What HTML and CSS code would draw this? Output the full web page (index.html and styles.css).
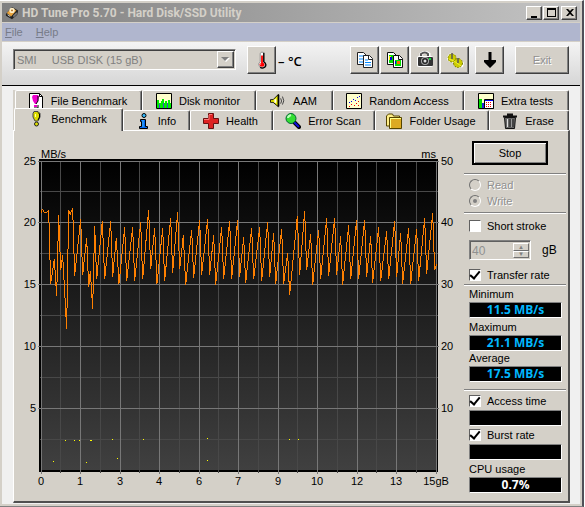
FILE: index.html
```html
<!DOCTYPE html>
<html lang="en">
<head>
<meta charset="utf-8">
<title>HD Tune Pro 5.70 - Hard Disk/SSD Utility</title>
<link rel="stylesheet" href="styles.css">
</head>
<body>
<div class="window">
  <header class="titlebar">
    <svg class="app-icon" viewBox="0 0 16 16"><path d="M1 9 8 1l7 4-1 5-6 5-7-4z" fill="#222"/><path d="M2 8 8 2l5 3-6 7z" fill="#e8a33c"/><circle cx="8" cy="5" r="3" fill="#fff0c8"/><circle cx="8" cy="5" r="1" fill="#a66018"/><path d="m9 11 4-4 1 2-4 4z" fill="#777"/><path d="m3 10 3 2" stroke="#eee"/></svg>
    <h1>HD Tune Pro 5.70 - Hard Disk/SSD Utility</h1>
    <div class="caption-buttons">
      <button aria-label="Minimize"><svg viewBox="0 0 11 10"><path d="M2 8h6v2H2z"/></svg></button>
      <button aria-label="Maximize"><svg viewBox="0 0 11 10"><path fill-rule="evenodd" d="M1 0h9v9H1zM2 2v6h7V2z"/></svg></button>
      <button aria-label="Close" class="close"><svg viewBox="0 0 11 10"><path d="M2 1h2l2 2 2-2h2L7 4.500 10 8H8L6 6 4 8H2l3-3.500z"/></svg></button>
    </div>
  </header>
  <nav class="menubar"><a href="#file"><u>F</u>ile</a><a href="#help"><u>H</u>elp</a></nav>
  <div class="toolbar">
    <div class="drive">
      <select disabled aria-label="Drive"><option>SMI &nbsp; &nbsp; USB DISK (15 gB)</option></select>
      <span class="drop"><svg viewBox="0 0 9 5"><path d="M1 1h8L5 5z" fill="#fff"/><path d="M0 0h8L4 4z" fill="#808080"/></svg></span>
    </div>
    <button class="tool temp" aria-label="Temperature"><svg viewBox="0 0 16 20"><path d="M6 2.500q2-3 4 0V12q3 2 1 5-3 3-6 0-2-3 1-5z" fill="#fff" stroke="#888"/><path d="M10 2v10q4 3 1 6-3 2-5 0" fill="none" stroke="#000" stroke-width="1.500"/><path d="M7 5h2v8q3 1 1 4-2 1-4 0-2-3 1-4z" fill="#f00"/><path d="M6 14h1v1H6z" fill="#fff"/></svg></button>
    <span class="degrees">– °C</span>
    <div class="tools">
      <button class="tool" aria-label="Copy text"><svg viewBox="0 0 18 18"><path d="M1.500 1.500h6l3 3v9h-9z" fill="#fff" stroke="#222"/><path d="M3 5h5M3 8h5M3 11h5" stroke="#08f"/><path d="M7.500 4.500h6l3 3v9h-9z" fill="#fff" stroke="#222"/><path d="M12.500 4.500v4h4" fill="none" stroke="#222"/><path d="M9 9h3M9 11.500h6M9 14h6" stroke="#08f"/></svg></button>
      <button class="tool" aria-label="Copy image"><svg viewBox="0 0 18 18"><path d="M1.500 1.500h6l3 3v9h-9z" fill="#fff" stroke="#111"/><path d="M3 4h4v8H3z" fill="#0d0"/><path d="M3 5h2v4H3z" fill="#fe0"/><path d="M4 6h2v3H4z" fill="#00d"/><path d="M7.500 4.500h6l3 3v9h-9z" fill="#fff" stroke="#111"/><path d="M12.500 4.500v4h4" fill="none" stroke="#111"/><path d="M9 9h6v6H9z" fill="#0d0"/><path d="M11 10h3v3h-3z" fill="#f60"/><path d="M9 10h1v3H9z" fill="#00d"/></svg></button>
      <button class="tool" aria-label="Save screenshot"><svg viewBox="0 0 18 18"><path d="M5 5V3q4-3 8 0v2" fill="none" stroke="#fff" stroke-width="3"/><path d="M5 6V3q4-3 7 0v3" fill="none" stroke="#555" stroke-width="2"/><rect x="1" y="5" width="16" height="11" rx="2" fill="#fff"/><rect x="2" y="6" width="15" height="9" rx="1" fill="#333"/><circle cx="9" cy="10" r="4" fill="#aaa"/><circle cx="9" cy="10" r="3" fill="#222"/><circle cx="9" cy="10" r="1.500" fill="#ddd"/><path d="M13 7h2v2h-2z" fill="#0d3"/></svg></button>
      <button class="tool" aria-label="Options"><svg viewBox="0 0 18 18"><path d="M1 6 3 3l2-1 3 1 2 4 5 1 3 4-1 4-4 1-4-1-1-4-4-1-3-2z" fill="#fff"/><circle cx="6" cy="7" r="4" fill="#cc0" stroke="#880" stroke-dasharray="2 1"/><circle cx="12" cy="12" r="4.500" fill="#cc0" stroke="#770" stroke-dasharray="2 1"/><path d="m8 10 7 5M3 8l5 2" stroke="#ee3"/><path d="M6 2v6M12 7v5" stroke="#555" stroke-width="1.500"/></svg></button>
      <button class="tool down" aria-label="Save results"><svg viewBox="0 0 18 18"><path d="M7.500 1h3v8H15v2l-6 6-6-6V9h4.500z" fill="#000"/></svg></button>
      <button class="tool exit" disabled>Exit</button>
    </div>
  </div>

  <main class="client">
    <div class="tabs back" role="tablist" aria-label="Tests">
      <button role="tab"><svg viewBox="0 0 16 16"><path d="M1.500.5h10l3 3v12h-13z" fill="#fff" stroke="#000"/><path d="M11.500.5v3h3" fill="none" stroke="#000"/><path d="M5 2h5l1 2-1 4-2 3H7L5 8 4 4z" fill="#e0c"/><path d="M10 3v5l-2 3M6 15h4v-3" fill="none" stroke="#000"/><path d="M6 12h3v2H6z" fill="#e0c"/></svg>File Benchmark</button>
      <button role="tab"><svg viewBox="0 0 16 16"><path d="M.5.5h15v15H.5z" fill="#ffc" stroke="#000"/><path d="M1 7h2v3h2V8h1V6h2v4h1V8h2v2h1V7h2v3h1v5H1z" fill="#0e0"/><path d="M3 11h1v4H3zM7 10h1v5H7zM11 10h1v5h-1z" fill="#44c"/></svg>Disk monitor</button>
      <button role="tab"><svg viewBox="0 0 18 16"><path d="M.5 6.500h3l6-6v14l-6-5h-3z" fill="#ee0" stroke="#000"/><path d="M5 6h2v4H5z" fill="#fff"/><path d="M9.500 1v13" stroke="#000" stroke-width="2"/><path d="M12 5q2 3 0 6M14 3q3 5 0 9" fill="none" stroke="#333"/></svg>AAM</button>
      <button role="tab"><svg viewBox="0 0 16 16"><path d="M.5.5h15v15H.5z" fill="#ffc" stroke="#000"/><path d="M3 9h1v1H3zM5 8h1v1H5zM7 6h1v1H7zM9 7h1v1H9zM11 4h1v1h-1zM13 3h1v1h-1z" fill="#00e"/><path d="M3 13h1v1H3zM5 11h1v1H5zM8 12h1v1H8zM10 10h1v1h-1zM12 12h1v1h-1zM12 8h1v1h-1z" fill="#e00"/></svg>Random Access</button>
      <button role="tab"><svg viewBox="0 0 16 16"><path d="M.5.5h15v15H.5z" fill="#ffc" stroke="#000"/><path d="M1 6h3v9H1z" fill="#0d0"/><path d="M4 10h2v5H4z" fill="#22d"/><path d="M6.500 6.500h9v9h-9z" fill="#fff" stroke="#000"/><path d="M7 7h8v1H7z" fill="#00e"/><path d="M8 9.500h6M8 11.500h6M8 13.500h6" stroke="#e00" stroke-dasharray="1 1"/></svg>Extra tests</button>
    </div>
    <div class="tabs front" role="tablist" aria-label="Tools">
      <button role="tab" aria-selected="true"><svg viewBox="0 0 16 16"><path d="M6 .5h4l2 2V6l-2 4H7L5 6V2.500z" fill="#dd0" stroke="#444"/><path d="M10 1.500 11.500 3v3L10 9" fill="none" stroke="#000"/><path d="M7 3h1v3H7z" fill="#ffa"/><circle cx="8.500" cy="13" r="2" fill="#dd0" stroke="#222"/></svg>Benchmark</button>
      <button role="tab"><svg viewBox="0 0 16 16"><circle cx="9" cy="2.500" r="2" fill="#3bf" stroke="#000"/><path d="M5.500 6.500h5v7h2v2h-8v-2h2v-5h-1z" fill="#06e" stroke="#000"/><path d="M8 7v7" stroke="#4bf"/></svg>Info</button>
      <button role="tab"><svg viewBox="0 0 16 16"><path d="M5.500.5h5v5h5v5h-5v5h-5v-5h-5v-5h5z" fill="#d22" stroke="#611"/><path d="M6 1.500h3M1 6.500h5V2" fill="none" stroke="#f77"/></svg>Health</button>
      <button role="tab"><svg viewBox="0 0 16 16"><path d="m9 9 5 5" stroke="#000" stroke-width="4" stroke-linecap="round"/><path d="m9 9 5 5" stroke="#11d" stroke-width="2"/><circle cx="6" cy="5.500" r="5" fill="#3d3" stroke="#063"/><path d="M3 5q0-2 3-3" fill="none" stroke="#bfb" stroke-width="2"/></svg>Error Scan</button>
      <button role="tab"><svg viewBox="0 0 16 16"><path d="M.5 13V3l2-2h4l1 2h6v10z" fill="#fe8" stroke="#540"/><path d="M3.500 15.500v-11h12v11z" fill="#da2" stroke="#540"/><path d="M4 5.500h11M4.500 5v10" stroke="#ff8"/></svg>Folder Usage</button>
      <button role="tab"><svg viewBox="0 0 16 16"><path d="M1 3.500h14M6 3V1.500h4V3" fill="none" stroke="#111" stroke-width="2"/><path d="M2.500 4.500h11l-1 11h-9z" fill="#666" stroke="#111"/><path d="M5.500 6v8" stroke="#ddd"/><path d="M8 6v8M11 6v8" stroke="#222"/><path d="M9.500 6v8" stroke="#999"/></svg>Erase</button>
    </div>

    <section class="panel">
      <svg class="chart" viewBox="14 144 448 345" role="img" aria-label="Transfer rate and access time">
        <defs><linearGradient id="plot" x1="0" y1="0" x2="0" y2="1"><stop offset="0"/><stop offset="1" stop-color="#404040"/></linearGradient></defs>
        <g shape-rendering="crispEdges">
          <path d="M39 159h399v313H39z"/>
          <path d="M41 161h396v309H41z" fill="url(#plot)"/>
          <path d="M40 191.500h398M40 253.500h398M40 315.500h398M40 377.500h398M40 439.500h398M60.500 161v312M100.500 161v312M139.500 161v312M179.500 161v312M218.500 161v312M258.500 161v312M297.500 161v312M337.500 161v312M376.500 161v312M416.500 161v312" stroke="#484848"/>
          <path d="M38 161.500h401M38 222.500h401M38 284.500h401M38 346.500h401M38 408.500h401M41.500 161v313M80.500 161v313M120.500 161v313M159.500 161v313M199.500 161v313M238.500 161v313M278.500 161v313M317.500 161v313M357.500 161v313M396.500 161v313M436.500 161v313" stroke="#777"/>
          <path d="M53 461h1v1h-1zM65 440h1v1h-1zM74 440h1v1h-1zM79 440h1v1h-1zM90 440h2v1h-2zM86 462h1v1h-1zM112 439h1v1h-1zM117 458h1v1h-1zM143 439h1v1h-1zM207 438h1v1h-1zM207 460h1v1h-1zM289 439h1v1h-1zM298 439h1v1h-1z" fill="#ff0"/>
          <svg x="0" y="140" width="480" height="200" viewBox="0 0 1440 600"><polyline fill="none" stroke="#ff8000" stroke-width="3" points="124,218 127,208 133,217 140,217 146,211 152,431 163,358 170,467 176,226 182,391 188,346 200,566 206,213 211,222 218,205 224,407 242,238 248,404 260,294 266,440 271,394 278,506 284,258 290,418 307,243 314,418 332,244 338,410 349,294 357,431 374,262 380,422 398,262 404,422 422,247 428,418 446,210 452,388 464,265 471,431 488,265 494,422 512,234 518,398 533,216 539,388 550,286 557,434 575,270 581,413 599,240 605,404 623,237 629,404 641,286 647,434 665,262 671,416 689,244 695,416 713,240 719,410 731,292 737,428 755,265 761,418 779,262 785,422 803,247 809,410 821,280 827,431 845,268 851,431 863,340 869,465 892,228 899,404 914,213 920,391 932,282 938,434 956,270 962,416 980,234 986,407 1004,234 1010,404 1022,289 1028,434 1046,256 1052,418 1070,240 1076,416 1094,240 1100,410 1112,289 1118,428 1136,262 1142,422 1160,274 1166,418 1184,243 1190,410 1202,280 1208,431 1226,265 1232,431 1250,268 1256,422 1274,234 1280,401 1298,219 1304,391 1310,372"/></svg>
        </g>
        <text x="41" y="158">MB/s</text><text x="436" y="158" text-anchor="end">ms</text>
        <g text-anchor="end"><text x="36" y="165">25</text><text x="36" y="226">20</text><text x="36" y="288">15</text><text x="36" y="350">10</text><text x="36" y="412">5</text></g>
        <g><text x="441" y="165">50</text><text x="441" y="226">40</text><text x="441" y="288">30</text><text x="441" y="350">20</text><text x="441" y="412">10</text></g>
        <g text-anchor="middle"><text x="41" y="485">0</text><text x="80" y="485">1</text><text x="120" y="485">3</text><text x="159" y="485">4</text><text x="199" y="485">6</text><text x="238" y="485">7</text><text x="278" y="485">9</text><text x="317" y="485">10</text><text x="357" y="485">12</text><text x="396" y="485">13</text><text x="436" y="485">15gB</text></g>
      </svg>
      <form class="side">
        <button type="button" class="stop">Stop</button>
        <hr class="after-stop">
        <label class="row off"><input type="radio" name="mode" disabled>Read</label>
        <label class="row off"><input type="radio" name="mode" checked disabled>Write</label>
        <hr class="after-mode">
        <label class="row"><input type="checkbox">Short stroke</label>
        <div class="size">
          <span class="spin"><input type="text" value="40" disabled aria-label="Short stroke size"><span class="steps"><i>▴</i><i>▾</i></span></span>gB
        </div>
        <label class="row"><input type="checkbox" checked>Transfer rate</label>
        <hr class="after-rate">
        <div class="caption">Minimum</div><output>11.5 MB/s</output>
        <div class="caption spaced">Maximum</div><output>21.1 MB/s</output>
        <div class="caption">Average</div><output>17.5 MB/s</output>
        <hr class="after-results">
        <label class="row"><input type="checkbox" checked>Access time</label><output></output>
        <label class="row"><input type="checkbox" checked>Burst rate</label><output></output>
        <div class="caption spaced">CPU usage</div><output class="plain">0.7%</output>
      </form>
    </section>
  </main>
</div>
</body>
</html>
```
FILE: styles.css
```css
* { box-sizing: border-box; }
body { margin: 0; padding-right: 1px; background: #fff; color: #000; font: 11px/14px "Liberation Sans", Arial, sans-serif; }
button, input, select { font: inherit; color: inherit; }
button { padding: 0; border: 1px solid; border-color: #fff #404040 #404040 #fff; background: #d4d0c8; box-shadow: inset -1px -1px #808080; display: flex; align-items: center; justify-content: center; }
svg { display: block; flex: none; }

.window { display: flex; flex-direction: column; min-height: 100vh; padding: 1px 2px 2px; background: #d4d0c8; border-top: 1px solid #fff; border-right: 2px solid #505058; border-bottom: 1px solid #808080; }

.titlebar { display: flex; align-items: center; height: 19px; margin-top: 1px; padding: 0 3px; gap: 3px; background: linear-gradient(90deg, #808080, #c4c4c4); color: #d4d0c8; }
.app-icon { width: 14px; height: 14px; }
h1 { flex: 1; margin: 0; font: bold 12px/18px Roboto, sans-serif; white-space: nowrap; }
.caption-buttons { display: flex; gap: 1px; }
.caption-buttons button { width: 16px; height: 14px; }
.caption-buttons .close { margin-left: 1px; }
.caption-buttons svg { width: 11px; height: 10px; }

.menubar { display: flex; gap: 13px; height: 18px; margin-top: 1px; padding: 0 3px; background: #b0b6ce; }
.menubar a { color: #777b88; line-height: 18px; text-decoration: none; }

.toolbar { display: flex; align-items: flex-start; height: 44px; margin-top: 1px; padding: 4px 11px 0 11px; background: linear-gradient(#f4f4f4, #d6d6d6); border-bottom: 1px solid #000; }
.drive { display: flex; width: 223px; height: 21px; margin-top: 3px; background: #d4d0c8; border: 1px solid; border-color: #808080 #fff #fff #808080; box-shadow: inset 1px 1px #404040; padding: 1px; }
.drive select { flex: 1; min-width: 0; appearance: none; padding: 0 2px; border: 0; background: transparent; color: #808080; opacity: 1; }
.drop { display: flex; align-items: center; justify-content: center; width: 17px; border: 1px solid; border-color: #fff #404040 #404040 #fff; box-shadow: inset -1px -1px #808080; }
.drop svg { width: 9px; height: 5px; }
.tool { width: 29px; height: 28px; }
.tool svg { width: 18px; height: 18px; }
.temp { margin-left: 11px; }
.degrees { margin: 7px 0 0 2px; font: 600 13px/16px "Open Sans", sans-serif; white-space: nowrap; }
.tools { display: flex; gap: 1px; margin-left: auto; }
.down { margin-left: 5px; }
.exit { width: 54px; margin-left: 10px; color: #909090; text-shadow: 1px 1px #fff; }

.client { flex: 1; display: flex; flex-direction: column; padding: 4px 10px 1px 11px; background: #f0f0f0; }
.tabs { display: grid; background: #d4d0c8; margin-right: 1px; }
.tabs button { gap: 7px; padding-right: 2px; border: 1px solid #fff; border-right-color: #404040; border-bottom: 0; border-radius: 2px 2px 0 0; box-shadow: inset -1px 0 #808080; white-space: nowrap; font-size: 11px; }
.tabs svg { width: 16px; height: 16px; }
.back { height: 20px; padding-left: 2px; grid-template-columns: 127fr 114fr 77fr 131fr 105fr; }
.front { height: 20px; padding-left: 1px; grid-template-columns: 109fr 67fr 83fr 102fr 114fr 80fr; }
.front [aria-selected] { position: relative; margin: -2px 0 -1px; padding-bottom: 3px; }

.panel { flex: 1; display: flex; justify-content: space-between; border: 1px solid #fff; border-right: 2px solid #505050; border-bottom: 2px solid #505050; background: #d4d0c8; }
.chart { flex: 1; min-width: 0; align-self: flex-start; margin-top: 13px; }
.chart text { font: 11px "Liberation Sans", Arial, sans-serif; }

.side { flex: none; display: flex; flex-direction: column; width: 106px; padding: 10px 2px 0 2px; }
.stop { width: 76px; height: 24px; margin-left: 8px; border: 2px solid #000; box-shadow: inset 1px 1px #fff, inset -1px -1px #808080; }
hr { width: 100%; height: 2px; margin: 0; border: 0; border-top: 1px solid #808080; border-bottom: 1px solid #fff; }
.after-stop { margin: 8px 0 2px; }
.after-mode { margin: 3px 0 4px; }
.after-rate { margin: 1px 0; }
.after-results { margin: 7px 0 2px; }
.row { display: flex; align-items: center; gap: 6px; height: 16px; padding-left: 5px; white-space: nowrap; }
.row.off { color: #909090; text-shadow: 1px 1px #fff; }
.row input { appearance: none; display: grid; place-items: center; flex: none; width: 12px; height: 12px; margin: 0; background: #fff; border: 1px solid; border-color: #606060 #fff #fff #606060; }
.row input[type="radio"] { border-radius: 50%; background: #d4d0c8; border-color: #707070 #fff #fff #707070; }
.row input[type="radio"]:checked::after { content: ""; width: 4px; height: 4px; border-radius: 50%; background: #808080; }
.row input[type="checkbox"]:checked::after { content: ""; width: 4px; height: 8px; border: solid #000; border-width: 0 2px 2px 0; transform: translateY(-1px) rotate(40deg); }
.size { display: flex; align-items: center; gap: 11px; height: 20px; margin: 6px 0 7px; padding-left: 5px; font-size: 12px; }
.spin { display: flex; width: 62px; height: 20px; border: 1px solid; border-color: #808080 #fff #fff #808080; box-shadow: inset 1px 1px #606060; padding: 2px 1px 1px 2px; }
.spin input { flex: 1; min-width: 0; padding: 0; border: 0; background: transparent; color: #909090; }
.steps { display: flex; flex-direction: column; width: 16px; }
.steps i { flex: 1; display: flex; align-items: center; justify-content: center; overflow: hidden; border: 1px solid; border-color: #fff #707070 #707070 #fff; color: #808080; font: 7px/6px "DejaVu Sans", sans-serif; }
.caption { height: 15px; padding-left: 5px; line-height: 14px; }
.caption.spaced { height: 17px; padding-top: 2px; }
output { display: block; height: 16px; margin: 0 4px 0 5px; border: 1px solid; border-color: #808080 #fff #fff #808080; background: #000; color: #00b8ff; font: bold 12px/14px "Open Sans", sans-serif; text-align: center; }
.row + output { margin-top: 1px; }
output + .row { margin-top: 1px; }
output.plain { color: #fff; }
```
